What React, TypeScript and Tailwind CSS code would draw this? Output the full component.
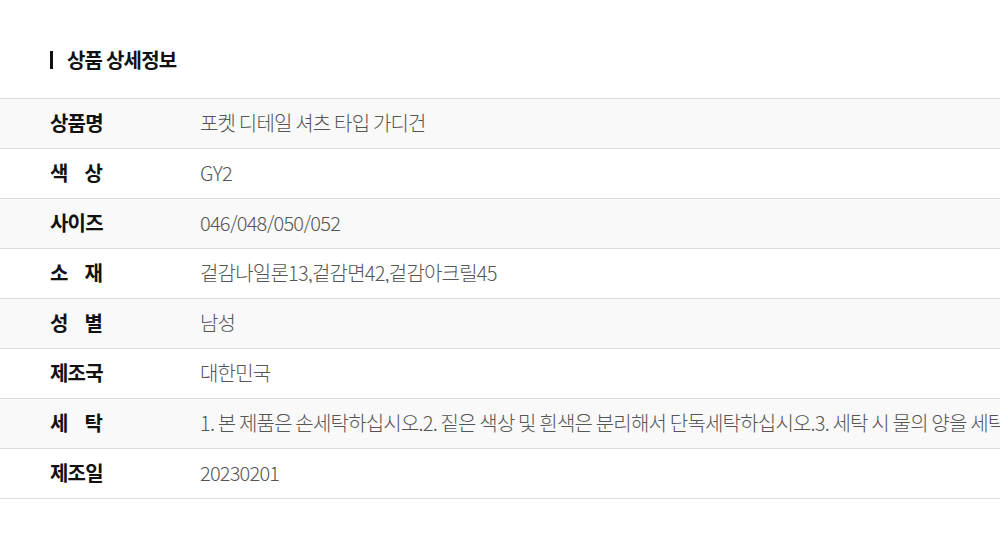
import React from "react";

const rows: { label: string[]; value: string }[] = [
  { label: ["상품명"], value: "포켓 디테일 셔츠 타입 가디건" },
  { label: ["색", "상"], value: "GY2" },
  { label: ["사이즈"], value: "046/048/050/052" },
  { label: ["소", "재"], value: "겉감나일론13,겉감면42,겉감아크릴45" },
  { label: ["성", "별"], value: "남성" },
  { label: ["제조국"], value: "대한민국" },
  {
    label: ["세", "탁"],
    value:
      "1. 본 제품은 손세탁하십시오.2. 짙은 색상 및 흰색은 분리해서 단독세탁하십시오.3. 세탁 시 물의 양을 세탁물에 비해 충분히 하십시오.",
  },
  { label: ["제조일"], value: "20230201" },
];

export default function App() {
  return (
    <div
      className="w-[1000px] h-[548px] bg-white overflow-hidden"
      style={{ fontFamily: '"Noto Sans CJK KR", "Noto Sans", sans-serif' }}
    >
      <div className="pl-[50px] flex items-center h-[98px] pt-[22px]">
        <div className="w-[3px] h-[18px] bg-[#111]" />
        <h2 className="ml-[14px] text-[20px] font-bold text-[#111] tracking-[-0.8px] leading-none">
          상품 상세정보
        </h2>
      </div>
      <div className="border-t border-[#dddddd]">
        {rows.map((r, i) => (
          <div
            key={i}
            className={`flex items-center h-[50px] border-b border-[#dddddd] pb-[2px] ${
              i % 2 === 0 ? "bg-[#f9f9f9]" : "bg-white"
            }`}
          >
            <div className="w-[200px] pl-[50px] shrink-0">
              <div className="flex justify-between w-[52px] whitespace-nowrap text-[20px] font-bold text-[#111] tracking-[-0.8px] leading-none">
                {r.label.map((l, j) => (
                  <span key={j}>{l}</span>
                ))}
              </div>
            </div>
            <div className="flex-1 min-w-0 overflow-hidden whitespace-nowrap text-[20px] font-light text-[#555] tracking-[-0.8px] leading-none">
              {r.value}
            </div>
          </div>
        ))}
      </div>
    </div>
  );
}
